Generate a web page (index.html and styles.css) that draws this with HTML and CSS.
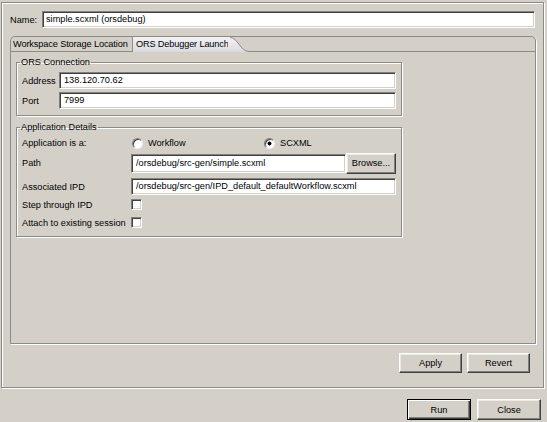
FILE: index.html
```html
<!DOCTYPE html>
<html>
<head>
<meta charset="utf-8">
<title>ORS Debugger Launch</title>
<link rel="stylesheet" href="styles.css">
</head>
<body>
<div class="main">
  <div class="name-row">
    <span class="name-label">Name:</span>
    <div class="field name-field">simple.scxml (orsdebug)</div>
  </div>
  <div class="folder">
    <div class="tabstrip">
      <div class="tab tab-first">Workspace Storage Location</div>
      <div class="tab-sel">
        <span class="tab-text">ORS Debugger Launch</span>
        <svg class="tab-curve" width="25" height="15" viewBox="0 0 25 15">
          <defs>
            <linearGradient id="tg" x1="0" y1="0" x2="0" y2="1">
              <stop offset="0" stop-color="#f3f3f6"/>
              <stop offset="1" stop-color="#d9d9df"/>
            </linearGradient>
          </defs>
          <path d="M0 0 H2 C10 0 12 15 21 15 H0 Z" fill="url(#tg)"/>
          <path d="M2 0.5 C10 0.5 12 14.5 21 14.5 H25" fill="none" stroke="#8a8a8a"/>
        </svg>
      </div>
      <div class="tab-fill"></div>
    </div>
    <div class="panel">
      <fieldset class="group group-ors">
        <legend>ORS Connection</legend>
        <div class="row row-ors">
          <span class="lbl lbl-ors">Address</span>
          <div class="field grow">138.120.70.62</div>
        </div>
        <div class="row row-ors gap3">
          <span class="lbl lbl-ors">Port</span>
          <div class="field grow">7999</div>
        </div>
      </fieldset>
      <fieldset class="group group-app">
        <legend>Application Details</legend>
        <div class="row row-radio">
          <span class="lbl lbl-app">Application is a:</span>
          <div class="radio-opt radio-first"><span class="radio"></span><span>Workflow</span></div>
          <div class="radio-opt"><span class="radio radio-on"></span><span>SCXML</span></div>
        </div>
        <div class="row row-path">
          <span class="lbl lbl-app">Path</span>
          <div class="field grow path-field">/orsdebug/src-gen/simple.scxml</div>
          <button class="btn browse">Browse...</button>
        </div>
        <div class="row row-ipd">
          <span class="lbl lbl-app">Associated IPD</span>
          <div class="field grow">/orsdebug/src-gen/IPD_default_defaultWorkflow.scxml</div>
        </div>
        <div class="row row-check">
          <span class="lbl lbl-app">Step through IPD</span>
          <span class="check"></span>
        </div>
        <div class="row row-check row-check2">
          <span class="lbl lbl-app">Attach to existing session</span>
          <span class="check"></span>
        </div>
      </fieldset>
    </div>
  </div>
  <div class="apply-row">
    <button class="btn btn-std">Apply</button>
    <button class="btn btn-std">Revert</button>
  </div>
</div>
<div class="bottom-row">
  <button class="btn btn-std btn-default">Run</button>
  <button class="btn btn-std">Close</button>
</div>
</body>
</html>
```

FILE: styles.css
```css
html, body {
  margin: 0;
  padding: 0;
}

body {
  width: 547px;
  height: 422px;
  overflow: hidden;
  background: #d4d0c8;
  color: #000;
  font-family: "Liberation Sans", Arial, sans-serif;
  font-size: 9.2px;
}

.main {
  margin: 2px 3px 0 1px;
  height: 386px;
  box-sizing: border-box;
  border: 1px solid #8c8a85;
  box-shadow: inset 1px 1px 0 #fff, 1px 1px 0 #fff;
  padding: 8px 7px 0 8px;
  display: flex;
  flex-direction: column;
}

.name-row {
  display: flex;
  align-items: center;
  height: 17px;
  margin-right: 1px;
}

.name-label {
  width: 32px;
  flex: none;
}

.field {
  height: 17px;
  box-sizing: border-box;
  background: #fff;
  border: 1px solid;
  border-color: #808080 #fff #fff #808080;
  box-shadow: inset 1px 1px 0 #404040, inset -1px -1px 0 #d4d0c8;
  padding: 0 0 0 4px;
  line-height: 15px;
  white-space: nowrap;
  overflow: hidden;
}

.name-field {
  flex: 1;
  padding-left: 3px;
}

.grow {
  flex: 1;
  min-width: 0;
}

/* Tab folder */
.folder {
  margin-top: 8px;
  height: 308px;
  flex: none;
  box-sizing: border-box;
  border: 1px solid #8a8a8a;
  border-radius: 5px 5px 0 0;
  box-shadow: 1px 1px 0 #fff;
  display: flex;
  flex-direction: column;
}

.tabstrip {
  display: flex;
  height: 15px;
  flex: none;
}

.tab {
  height: 15px;
  box-sizing: border-box;
  line-height: 14px;
  border-bottom: 1px solid #8a8a8a;
  white-space: nowrap;
}

.tab-first {
  width: 122px;
  padding-left: 2px;
  letter-spacing: -0.12px;
  border-right: 1px solid #8a8a8a;
  border-top-left-radius: 4px;
}

.tab-sel {
  display: flex;
  height: 15px;
}

.tab-text {
  width: 95px;
  padding-left: 3px;
  box-sizing: border-box;
  line-height: 14px;
  letter-spacing: -0.15px;
  white-space: nowrap;
  background: linear-gradient(#f3f3f6, #d9d9df);
}

.tab-curve {
  display: block;
  flex: none;
}

.tab-fill {
  flex: 1;
  border-bottom: 1px solid #8a8a8a;
}

.panel {
  flex: 1;
  padding: 4px 0 0 5px;
}

/* Group boxes */
.group {
  margin: 0;
  width: 386px;
  box-sizing: border-box;
  border: 1px solid #8c8a85;
  box-shadow: inset 1px 1px 0 #fff, 1px 1px 0 #fff;
  padding: 0 5px;
  min-width: 0;
}

.group legend {
  padding: 0 1px;
  margin-left: -2px;
  line-height: 12px;
  height: 12px;
}

.group-ors {
  padding-top: 4px;
  padding-bottom: 6px;
}

.group-app {
  margin-top: 5px;
  padding-top: 2px;
  padding-bottom: 7px;
}

.row {
  display: flex;
  align-items: center;
}

.gap3 {
  margin-top: 3px;
}

.lbl {
  flex: none;
  white-space: nowrap;
}

.lbl-ors {
  width: 37px;
}

.lbl-app {
  width: 109px;
}

.row-radio {
  height: 16px;
}

.radio-opt {
  display: flex;
  align-items: center;
  gap: 5px;
}

.radio-first {
  width: 132px;
}

.radio {
  width: 11px;
  height: 11px;
  box-sizing: border-box;
  border-radius: 50%;
  border: 1px solid;
  border-color: #808080 #eee #eee #808080;
  box-shadow: inset 1px 1px 0 #404040;
  background: #fff;
  margin-left: 1px;
}

.radio-on {
  background: radial-gradient(circle, #000 0, #000 1.7px, #fff 2.3px);
}

.row-path {
  margin-top: 2px;
  height: 20px;
  gap: 0;
}

.path-field {
  height: 19px;
  line-height: 17px;
}

.browse {
  width: 50px;
  height: 21px;
  margin-left: 5px;
  flex: none;
}

.row-ipd {
  margin-top: 5px;
}

.row-check {
  margin-top: 3px;
  height: 13px;
}

.row-check2 {
  margin-top: 5px;
}

.check {
  width: 11px;
  height: 11px;
  box-sizing: border-box;
  background: #fff;
  border: 1px solid;
  border-color: #808080 #fff #fff #808080;
  box-shadow: inset 1px 1px 0 #404040, inset -1px -1px 0 #d4d0c8;
}

/* Buttons */
.btn {
  font-family: inherit;
  font-size: inherit;
  color: #000;
  background: #d4d0c8;
  border: 1px solid;
  border-color: #fff #404040 #404040 #fff;
  box-shadow: inset -1px -1px 0 #808080, inset 1px 1px 0 #ece9e2;
  padding: 0;
  margin: 0;
  text-align: center;
  border-radius: 0;
}

.btn-std {
  width: 63px;
  height: 20px;
}

.btn-default {
  border-color: #000;
  box-shadow: inset 1px 1px 0 #fff, inset -1px -1px 0 #404040, inset -2px -2px 0 #808080;
}

.apply-row {
  display: flex;
  justify-content: flex-end;
  gap: 5px;
  margin-top: 9px;
  margin-right: 6px;
}

.bottom-row {
  display: flex;
  justify-content: flex-end;
  gap: 6px;
  margin-top: 11px;
  margin-right: 6px;
}

.bottom-row .btn-std {
  width: 64px;
  height: 21px;
}
```
